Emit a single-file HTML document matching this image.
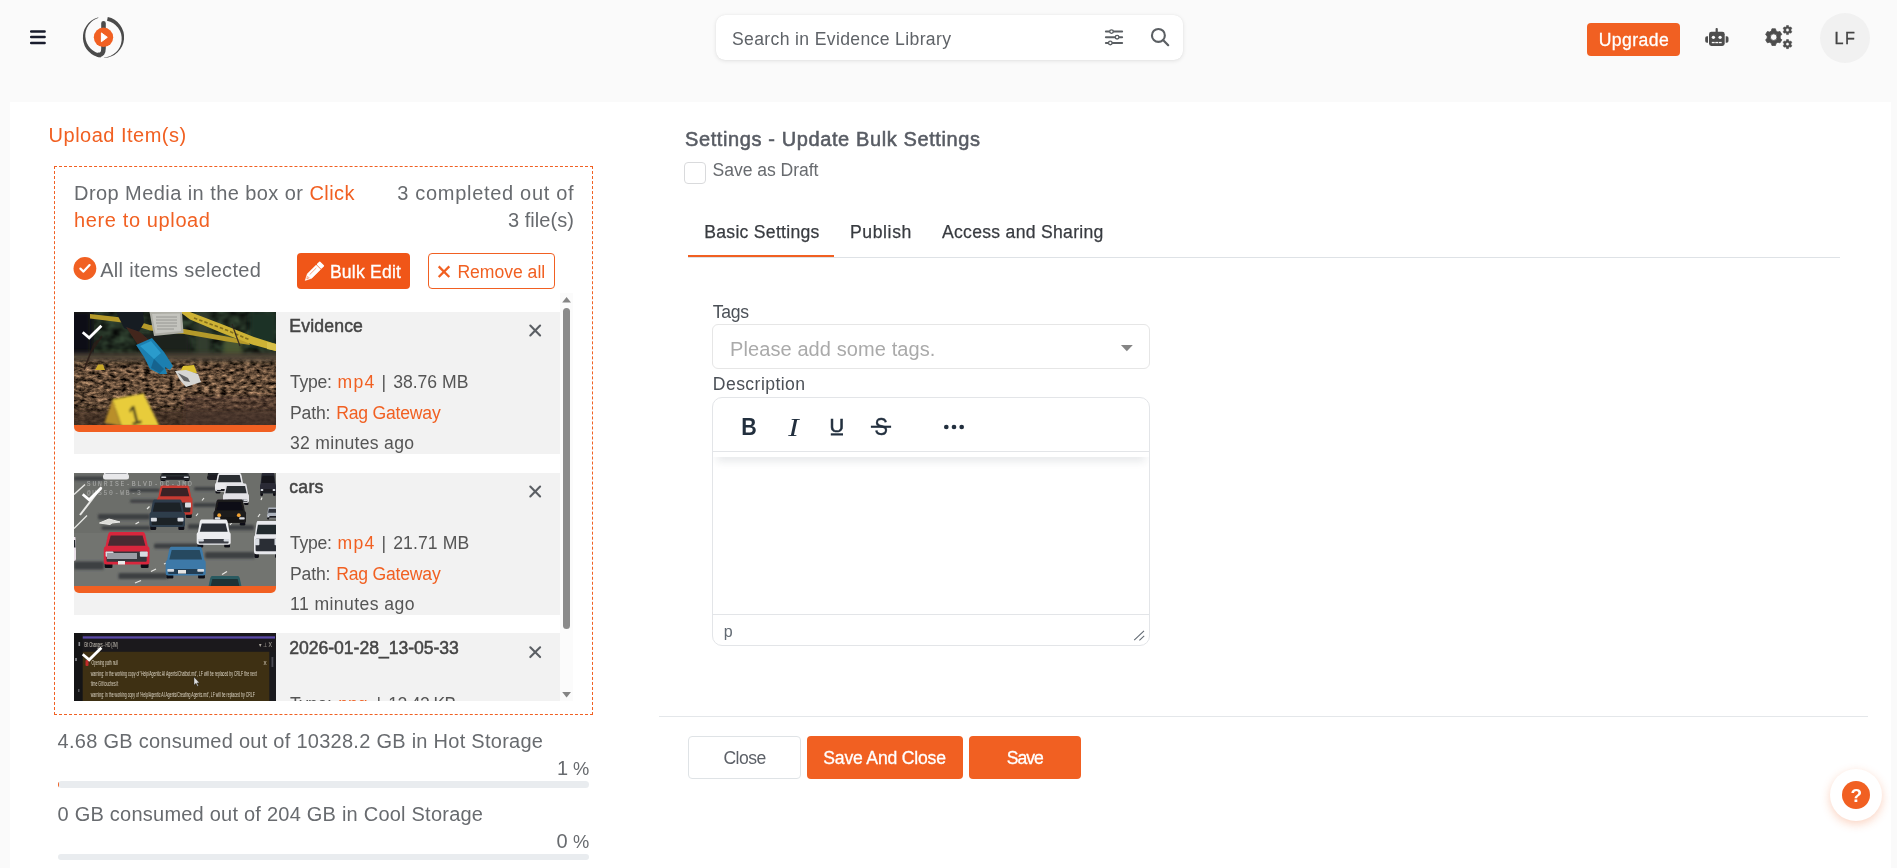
<!DOCTYPE html>
<html lang="en"><head><meta charset="utf-8"><title>Upload Item(s) - Update Bulk Settings</title>
<style>
*{box-sizing:border-box;margin:0;padding:0}
html,body{width:1897px;height:868px;overflow:hidden;background:#fafafa;font-family:"Liberation Sans",sans-serif}
.a{position:absolute}
.t{position:absolute;line-height:1;white-space:nowrap}
.o{background:#f16022}
svg{position:absolute;overflow:visible}
</style></head><body>
<!-- page panel -->
<div class="a" style="left:10px;top:102px;width:1881px;height:766px;background:#fff"></div>

<!-- HEADER -->
<svg style="left:0;top:0" width="60" height="60" viewBox="0 0 60 60"><path d="M31.2 31.5H44.6M31.2 37.1H44.6M31.2 42.95H44.6" stroke="#191c2d" stroke-width="2.5" stroke-linecap="round" fill="none"/></svg>
<svg style="left:0;top:0" width="160" height="80" viewBox="0 0 160 80">
<path d="M97.82 17.40A20.6 20.6 0 0 0 100.63 57.60L101.27 53.92A18.55 18.55 0 0 1 98.74 17.72Z" fill="#4b4b4b"/><path d="M107.78 17.05A20.6 20.6 0 0 1 104.22 57.79L103.80 57.39A18.55 18.55 0 0 0 107.01 20.71Z" fill="#4b4b4b"/>
<path d="M103.5 23.3V48.2C103.5 53 101.8 55 98.6 54.9" fill="none" stroke="#4b4b4b" stroke-width="4.6" stroke-linecap="round"/>
<circle cx="103.5" cy="37.3" r="9.7" fill="#f16022"/>
<path d="M101.4 32.9L107.3 37.3L101.4 41.7Z" fill="#fff" stroke="#fff" stroke-width="1" stroke-linejoin="round"/>
</svg>
<div class="a" style="left:716px;top:15px;width:467px;height:45px;background:#fff;border-radius:9px;box-shadow:0 1px 4px rgba(0,0,0,.10),0 0 1px rgba(0,0,0,.08)"></div>
<svg style="left:0;top:0" width="1897" height="80" viewBox="0 0 1897 80"><path d="M1105.9 31.6H1122.1" stroke="#5b5f63" stroke-width="2" stroke-linecap="round"/><circle cx="1111.5" cy="31.6" r="1.8" fill="#fff" stroke="#5b5f63" stroke-width="1.35"/><path d="M1105.9 37.15H1122.1" stroke="#5b5f63" stroke-width="2" stroke-linecap="round"/><circle cx="1117.1" cy="37.15" r="1.8" fill="#fff" stroke="#5b5f63" stroke-width="1.35"/><path d="M1105.9 42.9H1122.1" stroke="#5b5f63" stroke-width="2" stroke-linecap="round"/><circle cx="1110.3" cy="42.9" r="1.8" fill="#fff" stroke="#5b5f63" stroke-width="1.35"/><circle cx="1158.4" cy="35.4" r="6.45" fill="none" stroke="#5b5f63" stroke-width="2.1"/><path d="M1163.3 40.2L1168.2 45.2" stroke="#5b5f63" stroke-width="2.2" stroke-linecap="round"/><rect x="1709" y="31.8" width="15.7" height="14.2" rx="2.4" fill="#4d4d4d"/><rect x="1715.6" y="28" width="2.2" height="5" rx=".9" fill="#4d4d4d"/><path d="M1708 36.2H1707Q1705.2 36.2 1705.2 38V41Q1705.2 42.8 1707 42.8H1708Z" fill="#4d4d4d"/><path d="M1725.7 36.2H1726.7Q1728.5 36.2 1728.5 38V41Q1728.5 42.8 1726.7 42.8H1725.7Z" fill="#4d4d4d"/><circle cx="1713.4" cy="37.3" r="1.65" fill="#fafafa"/><circle cx="1720.1" cy="37.3" r="1.65" fill="#fafafa"/><rect x="1711.8" y="41.9" width="2.9" height="1.3" fill="#fafafa"/><rect x="1715.3" y="41.9" width="2.9" height="1.3" fill="#fafafa"/><rect x="1718.8" y="41.9" width="2.9" height="1.3" fill="#fafafa"/><path fill-rule="evenodd" fill="#4d4d4d" stroke="#4d4d4d" stroke-width=".8" stroke-linejoin="round" d="M1776.00 43.34L1775.47 45.46L1771.93 45.46L1771.40 43.34L1769.49 42.24L1767.38 42.84L1765.62 39.78L1767.19 38.25L1767.19 36.05L1765.62 34.52L1767.38 31.46L1769.49 32.06L1771.40 30.96L1771.93 28.84L1775.47 28.84L1776.00 30.96L1777.91 32.06L1780.02 31.46L1781.78 34.52L1780.21 36.05L1780.21 38.25L1781.78 39.78L1780.02 42.84L1777.91 42.24ZM1777.00 37.15A3.3 3.3 0 1 0 1770.40 37.15A3.3 3.3 0 1 0 1777.00 37.15Z"/><path fill-rule="evenodd" fill="#4d4d4d" stroke="#4d4d4d" stroke-width=".5" stroke-linejoin="round" d="M1788.72 33.33L1788.47 34.60L1786.53 34.60L1786.28 33.33L1785.27 32.75L1784.04 33.16L1783.08 31.49L1784.05 30.63L1784.05 29.47L1783.08 28.61L1784.04 26.94L1785.27 27.35L1786.28 26.77L1786.53 25.50L1788.47 25.50L1788.72 26.77L1789.73 27.35L1790.96 26.94L1791.92 28.61L1790.95 29.47L1790.95 30.63L1791.92 31.49L1790.96 33.16L1789.73 32.75ZM1789.20 30.05A1.7 1.7 0 1 0 1785.80 30.05A1.7 1.7 0 1 0 1789.20 30.05Z"/><path fill-rule="evenodd" fill="#4d4d4d" stroke="#4d4d4d" stroke-width=".5" stroke-linejoin="round" d="M1788.72 47.38L1788.47 48.65L1786.53 48.65L1786.28 47.38L1785.27 46.80L1784.04 47.21L1783.08 45.54L1784.05 44.68L1784.05 43.52L1783.08 42.66L1784.04 40.99L1785.27 41.40L1786.28 40.82L1786.53 39.55L1788.47 39.55L1788.72 40.82L1789.73 41.40L1790.96 40.99L1791.92 42.66L1790.95 43.52L1790.95 44.68L1791.92 45.54L1790.96 47.21L1789.73 46.80ZM1789.20 44.10A1.7 1.7 0 1 0 1785.80 44.10A1.7 1.7 0 1 0 1789.20 44.10Z"/></svg>
<div class="a o" style="left:1587px;top:23px;width:93px;height:33px;border-radius:4px"></div>
<div class="a" style="left:1820px;top:12.5px;width:50px;height:50px;border-radius:50%;background:#f1f1f1"></div>

<!-- LEFT -->
<div class="a" style="left:54px;top:166px;width:539px;height:549px;border:1px dashed #f16022"></div>
<svg style="left:0;top:0" width="700" height="868" viewBox="0 0 700 868"><circle cx="84.9" cy="268.5" r="11.4" fill="#f16022"/><path d="M80.4 268.6L83.5 271.6L89.6 265.1" fill="none" stroke="#fff" stroke-width="2.2" stroke-linecap="round" stroke-linejoin="round"/></svg>
<div class="a" style="left:297px;top:253px;width:113px;height:36px;border-radius:4px;background:#f05618"></div>
<div class="a" style="left:428px;top:253px;width:127px;height:36px;border-radius:4px;border:1px solid #f16022;background:#fff"></div>
<!-- list -->
<div class="a" style="left:560px;top:293px;width:13px;height:408px;background:#fbfbfb"></div>
<div class="a" style="left:74px;top:296px;width:500px;height:405px;overflow:hidden">
  <div class="a" style="left:0;top:16px;width:486px;height:142px;background:#f2f2f2"></div>
  <div class="a" style="left:0;top:177px;width:486px;height:142px;background:#f2f2f2"></div>
  <div class="a" style="left:0;top:337px;width:486px;height:142px;background:#f2f2f2"></div>
  <div class="a o" style="left:0;top:120px;width:202px;height:16px;border-radius:0 0 5px 5px"></div>
  <div class="a o" style="left:0;top:281px;width:202px;height:16px;border-radius:0 0 5px 5px"></div>
  <svg style="left:0;top:16px;overflow:hidden" width="202" height="113" viewBox="0 0 202 113"><defs><linearGradient id="g1a" x1="0" y1="0" x2="1" y2="0"><stop offset="0" stop-color="#14171a"/><stop offset=".3" stop-color="#1b231f"/><stop offset=".62" stop-color="#26332a"/><stop offset="1" stop-color="#1e2a24"/></linearGradient><linearGradient id="g1c" x1="0" y1="0" x2="0" y2="1"><stop offset="0" stop-color="#6a5a48" stop-opacity=".55"/><stop offset=".2" stop-color="#000" stop-opacity="0"/><stop offset=".62" stop-color="#000" stop-opacity="0"/><stop offset="1" stop-color="#20130c" stop-opacity=".5"/></linearGradient><filter id="bl1"><feGaussianBlur stdDeviation="2.2"/></filter><filter id="bl2"><feGaussianBlur stdDeviation="0.55"/></filter><filter id="bl3"><feGaussianBlur stdDeviation="1"/></filter><filter id="leaf" x="0" y="0" width="1" height="1" color-interpolation-filters="sRGB"><feTurbulence type="fractalNoise" baseFrequency="0.17 0.3" numOctaves="3" seed="11"/><feColorMatrix type="matrix" values="1.15 0 0 0 -0.195  0.92 0 0 0 -0.17  0.72 0 0 0 -0.145  0 0 0 0 1"/></filter><filter id="fol" x="0" y="0" width="1" height="1" color-interpolation-filters="sRGB"><feTurbulence type="fractalNoise" baseFrequency="0.09 0.12" numOctaves="2" seed="3"/><feColorMatrix type="matrix" values="0.3 0 0 0 -0.03  0.42 0 0 0 -0.045  0.3 0 0 0 -0.03  0 0 0 0 .9"/></filter></defs><rect width="202" height="113" fill="url(#g1a)"/><rect x="20" width="182" height="52" filter="url(#fol)"/><g filter="url(#bl1)"><rect x="150" y="22" width="18" height="30" fill="#4a5630"/><rect x="122" y="0" width="14" height="46" fill="#303c2e"/><rect x="176" y="0" width="26" height="34" fill="#1f3228"/><rect x="-4" y="0" width="20" height="52" fill="#0e1012"/><rect x="66" y="22" width="50" height="24" fill="#1c241e"/></g><rect y="44" width="202" height="69" filter="url(#leaf)"/><rect y="44" width="202" height="69" fill="url(#g1c)"/><g filter="url(#bl1)"><rect x="-5" y="41" width="212" height="7" fill="#4c4334"/><rect x="-5" y="98" width="212" height="20" fill="#46342a" opacity=".6"/><rect x="110" y="84" width="100" height="34" fill="#4a382c" opacity=".45"/></g><path d="M10 58L20 32L24 28M17 40L28 24" stroke="#2a1c16" stroke-width="1.6" fill="none" opacity=".8"/><g filter="url(#bl2)"><path d="M16 2L52 6L76 13L110 17L150 24L174 29L176 33L150 29L110 22L76 18.5L52 11L16 6.5Z" fill="#b59a2a"/><path d="M106 0L116 0L150 13L180 25L202 32L202 39L178 32.5L148 21L116 7.5Z" fill="#cdb234"/><path d="M120 6L150 17L176 28" stroke="#6b5a18" stroke-width="1.6" stroke-dasharray="3.5 2" fill="none" opacity=".75"/><path d="M193 30L202 32L202 39L193 37Z" fill="#d8c048"/></g><path d="M158 12L163 26L166 34" stroke="#2b2220" stroke-width="1.3" fill="none" opacity=".85"/><g filter="url(#bl2)"><path d="M75.5 0L108 0L109.5 21L80 24Z" fill="#aeaea6"/><path d="M78 2L106 1.5L107 19L81.5 21.5Z" fill="#c4c4be"/><path d="M82 5H103M82 8H103M82 11H103M83 14H103M83 17H100" stroke="#8e8e88" stroke-width=".8"/></g><g filter="url(#bl2)"><path d="M42 0L69 0L70 11L64 21L50 16Z" fill="#171a24"/><path d="M52 15L66 20L77 30L66 36Z" fill="#43281e"/><path d="M62 33L78 26L90 40L99 54L96 58L91 55L93 62L86 62L76 57L70 45Z" fill="#1a7fb0"/><path d="M66 34L77 29L87 41L80 47Z" fill="#2a9bcc"/><path d="M80 47L90 57L86 61L77 56Z" fill="#13638e"/></g><g filter="url(#bl2)"><path d="M21 58L24 52.5L29 52.5L31 58Z" fill="#c9a92a"/><path d="M106 60L109 54L120 53L123 61Z" fill="#dcc030"/><path d="M101 59L112 58L124 62L127 70L118 73L112 75L106 68Z" fill="#d6d6d3"/><path d="M104 61L114 66L116 70L110 69Z" fill="#626262"/></g><g filter="url(#bl3)"><path d="M38.5 87.5L30.5 111L47 114Z" fill="#b98f2a"/><path d="M38.5 87.3L69.5 81.5L85.5 114L47.5 114Z" fill="#e8cc3a"/><text x="55" y="112" font-family="Liberation Sans, sans-serif" font-weight="700" font-size="27" fill="#3a3420" transform="rotate(-14 62 102)" opacity=".85" textLength="11" lengthAdjust="spacingAndGlyphs">1</text></g><path d="M9.799999999999999 21.2L15.2 25.799999999999997L26.4 14.799999999999999" fill="none" stroke="#fff" stroke-width="2.8" stroke-linecap="square" stroke-linejoin="miter"/></svg><svg style="left:0;top:177px;overflow:hidden" width="202" height="113" viewBox="0 0 202 113"><defs><filter id="b2"><feGaussianBlur stdDeviation="0.45"/></filter><filter id="b3" x="-10%" y="-50%" width="120%" height="200%"><feGaussianBlur stdDeviation="1"/></filter></defs><rect width="202" height="113" fill="#6c6e6a"/><rect y="60" width="202" height="53" fill="#727470"/><g filter="url(#b2)"><rect x="0" y="3.5" width="30" height="4" rx="1.5" fill="#3d3f43" filter="url(#b3)"/><rect x="55" y="15.5" width="31" height="3.6" rx="1.5" fill="#3d3f43" filter="url(#b3)"/><rect x="56" y="26.5" width="28" height="3.2" rx="1.5" fill="#3d3f43" filter="url(#b3)"/><rect x="119" y="30" width="24" height="4" rx="1.5" fill="#3d3f43" filter="url(#b3)"/><rect x="24" y="41" width="52" height="5.5" rx="1.5" fill="#3d3f43" filter="url(#b3)"/><rect x="27.6" y="53" width="49" height="4" rx="1.5" fill="#3d3f43" filter="url(#b3)"/><rect x="80" y="70.5" width="44" height="5" rx="1.5" fill="#3d3f43" filter="url(#b3)"/><rect x="131" y="79" width="50" height="6.5" rx="1.5" fill="#3d3f43" filter="url(#b3)"/><rect x="0" y="88.5" width="30" height="8" rx="1.5" fill="#3d3f43" filter="url(#b3)"/><rect x="44.5" y="100" width="49" height="6" rx="1.5" fill="#3d3f43" filter="url(#b3)"/><rect x="120" y="14" width="22" height="3.5" rx="1.5" fill="#3d3f43" filter="url(#b3)"/><rect x="114" y="51" width="28" height="5" rx="1.5" fill="#3d3f43" filter="url(#b3)"/><rect x="150" y="52" width="30" height="5" rx="1.5" fill="#3d3f43" filter="url(#b3)"/><g stroke="#e9e9e6" fill="none"><path d="M0 21.5L11 11.5" stroke-width="1.4"/><path d="M6 42L27.5 14" stroke-width="2"/><path d="M0 55.5L13 42.5" stroke-width="1.2"/><path d="M25.5 50L35 46L46 49L38 50L36 51.5Z" stroke-width="1" fill="#dcdcd8"/><path d="M73 36L75.5 33.5" stroke-width="1.2"/><path d="M61.5 51L65 49" stroke-width="1.2"/><path d="M77 98.5L82 96" stroke-width="1.2"/><path d="M61 110L67 107.5" stroke-width="1.2"/><path d="M148 101.5L153 98.5" stroke-width="1.2"/><path d="M122 43L124 40.5" stroke-width="1.2"/><path d="M128 27.5L130 25" stroke-width="1.2"/><path d="M184 44L186 41" stroke-width="1.2"/><path d="M187 27L188 24.5" stroke-width="1.2"/><path d="M156 52L158 49.5" stroke-width="1.2"/><path d="M90 91L95 89" stroke-width="1.2"/></g><path d="M32.6 -4.0H51.4Q52.4 -4.0 52.9 -2.4L54.2 1.2H29.8L31.1 -2.4Q31.6 -4.0 32.6 -4.0Z" fill="#e8e8ea"/><path d="M32.9 -2.7H51.1L52.7 0.6H31.3Z" fill="#23262c"/><rect x="29.0" y="0.7" width="26.0" height="5.8" rx="2.5" fill="#e8e8ea"/><rect x="86.6" y="5.1" width="5.1" height="2.9" rx="1.2" fill="#111114"/><rect x="110.3" y="5.1" width="5.1" height="2.9" rx="1.2" fill="#111114"/><path d="M90.2 -3.0H111.8Q113.0 -3.0 113.6 -1.4L115.1 2.5H86.9L88.4 -1.4Q89.0 -3.0 90.2 -3.0Z" fill="#2c2e32"/><path d="M90.5 -1.7H111.5L113.3 1.8H88.7Z" fill="#1a1c20"/><rect x="86.0" y="2.0" width="30.0" height="5.0" rx="2.5" fill="#2c2e32"/><rect x="87.8" y="3.6" width="26.4" height="2.6" rx="1" fill="#1c1c20"/><rect x="87.2" y="3.6" width="5.1" height="1.4" rx=".8" fill="#d8dce2"/><rect x="109.7" y="3.6" width="5.1" height="1.4" rx=".8" fill="#d8dce2"/><path d="M135.2 -2.0H146.8Q147.4 -2.0 147.7 -0.7L148.5 2.5H133.5L134.3 -0.7Q134.6 -2.0 135.2 -2.0Z" fill="#1e1e22"/><path d="M135.4 -0.9H146.6L147.6 2.0H134.4Z" fill="#23262c"/><rect x="133.0" y="2.0" width="16.0" height="5.0" rx="2.5" fill="#1e1e22"/><rect x="141.6" y="15.2" width="4.9" height="5.3" rx="1.2" fill="#111114"/><rect x="164.5" y="15.2" width="4.9" height="5.3" rx="1.2" fill="#111114"/><path d="M145.1 0.0H165.9Q167.1 0.0 167.7 3.2L169.1 10.7H141.9L143.3 3.2Q143.9 0.0 145.1 0.0Z" fill="#e9e9ec"/><path d="M145.3 2.1H165.7L167.4 9.4H143.6Z" fill="#2a2d33"/><rect x="141.0" y="9.6" width="29.0" height="8.9" rx="2.5" fill="#e9e9ec"/><rect x="142.7" y="16.0" width="25.5" height="2.0" rx="1" fill="#1c1c20"/><rect x="142.2" y="16.0" width="4.9" height="1.0" rx=".8" fill="#d8dce2"/><rect x="163.9" y="16.0" width="4.9" height="1.0" rx=".8" fill="#d8dce2"/><rect x="186.3" y="17.0" width="2.7" height="6.0" rx="1.2" fill="#111114"/><rect x="199.0" y="17.0" width="2.7" height="6.0" rx="1.2" fill="#111114"/><path d="M188.2 0.0H199.8Q200.4 0.0 200.7 3.4L201.5 11.5H186.5L187.3 3.4Q187.6 0.0 188.2 0.0Z" fill="#2a2c36"/><path d="M188.4 2.8H199.6L200.6 10.1H187.4Z" fill="#15161a"/><rect x="186.0" y="10.3" width="16.0" height="10.3" rx="2.5" fill="#2a2c36"/><rect x="187.0" y="16.1" width="14.1" height="3.7" rx="1" fill="#1c1c20"/><rect x="186.6" y="16.1" width="2.7" height="1.9" rx=".8" fill="#d8dce2"/><rect x="198.6" y="16.1" width="2.7" height="1.9" rx=".8" fill="#d8dce2"/><rect x="83.7" y="36.5" width="6.0" height="8.5" rx="1.2" fill="#111114"/><rect x="111.8" y="36.5" width="6.0" height="8.5" rx="1.2" fill="#111114"/><path d="M88.0 12.5H113.5Q115.0 12.5 115.7 16.3L117.4 25.2H84.1L85.8 16.3Q86.5 12.5 88.0 12.5Z" fill="#c83a30"/><path d="M88.3 15.1H113.2L115.3 23.2H86.2Z" fill="#3a2226"/><rect x="83.0" y="23.9" width="35.5" height="17.8" rx="2.5" fill="#c83a30"/><rect x="85.1" y="29.4" width="31.2" height="9.9" rx="1" fill="#26262a"/><rect x="84.4" y="29.4" width="6.0" height="5.2" rx=".8" fill="#d8dce2"/><rect x="111.0" y="29.4" width="6.0" height="5.2" rx=".8" fill="#d8dce2"/><rect x="149.5" y="26.4" width="4.4" height="5.6" rx="1.2" fill="#111114"/><rect x="170.1" y="26.4" width="4.4" height="5.6" rx="1.2" fill="#111114"/><path d="M152.6 10.5H171.4Q172.4 10.5 172.9 13.9L174.2 21.7H149.8L151.1 13.9Q151.6 10.5 152.6 10.5Z" fill="#e2e2e6"/><path d="M152.9 13.1H171.1L172.7 20.4H151.3Z" fill="#2a2d33"/><rect x="149.0" y="20.6" width="26.0" height="9.3" rx="2.5" fill="#e2e2e6"/><rect x="150.6" y="26.6" width="22.9" height="2.6" rx="1" fill="#55585e"/><rect x="150.0" y="26.6" width="4.4" height="1.4" rx=".8" fill="#d8dce2"/><rect x="169.5" y="26.6" width="4.4" height="1.4" rx=".8" fill="#d8dce2"/><rect x="76.2" y="49.1" width="6.0" height="7.9" rx="1.2" fill="#111114"/><rect x="104.3" y="49.1" width="6.0" height="7.9" rx="1.2" fill="#111114"/><path d="M80.5 26.5H106.0Q107.5 26.5 108.2 30.7L109.9 40.5H76.6L78.3 30.7Q79.0 26.5 80.5 26.5Z" fill="#2f3c4c"/><path d="M80.8 29.6H105.7L107.8 38.7H78.7Z" fill="#1c2028"/><rect x="75.5" y="39.1" width="35.5" height="14.8" rx="2.5" fill="#2f3c4c"/><rect x="77.6" y="44.8" width="31.2" height="7.3" rx="1" fill="#1e2228"/><rect x="76.9" y="44.8" width="6.0" height="3.8" rx=".8" fill="#d8dce2"/><rect x="103.5" y="44.8" width="6.0" height="3.8" rx=".8" fill="#d8dce2"/><rect x="140.2" y="45.7" width="5.5" height="6.8" rx="1.2" fill="#111114"/><rect x="165.8" y="45.7" width="5.5" height="6.8" rx="1.2" fill="#111114"/><path d="M144.1 26.5H167.4Q168.8 26.5 169.4 30.2L171.0 39.0H140.5L142.1 30.2Q142.8 26.5 144.1 26.5Z" fill="#1e1b1f"/><path d="M144.4 29.1H167.1L169.1 37.4H142.4Z" fill="#0f0f12"/><rect x="139.5" y="37.7" width="32.5" height="12.2" rx="2.5" fill="#1e1b1f"/><rect x="141.4" y="44.2" width="28.6" height="4.6" rx="1" fill="#141416"/><rect x="140.8" y="44.2" width="5.5" height="2.4" rx=".8" fill="#d8dce2"/><rect x="165.2" y="44.2" width="5.5" height="2.4" rx=".8" fill="#d8dce2"/><circle cx="145.2" cy="42.2" r="1.9" fill="#f2a432"/><circle cx="164.8" cy="42.2" r="1.9" fill="#f2a432"/><rect x="193.2" y="43.4" width="2.0" height="3.1" rx="1.2" fill="#111114"/><rect x="202.7" y="43.4" width="2.0" height="3.1" rx="1.2" fill="#111114"/><path d="M194.7 34.5H203.3Q203.8 34.5 204.0 36.3L204.6 40.5H193.4L194.0 36.3Q194.2 34.5 194.7 34.5Z" fill="#aeb4be"/><path d="M194.8 35.9H203.2L203.9 39.8H194.1Z" fill="#30343c"/><rect x="193.0" y="39.9" width="12.0" height="5.4" rx="2.5" fill="#aeb4be"/><rect x="193.7" y="42.9" width="10.6" height="1.9" rx="1" fill="#1c1c20"/><rect x="193.5" y="42.9" width="2.0" height="1.0" rx=".8" fill="#d8dce2"/><rect x="202.5" y="42.9" width="2.0" height="1.0" rx=".8" fill="#d8dce2"/><rect x="123.4" y="67.2" width="5.8" height="7.3" rx="1.2" fill="#111114"/><rect x="150.2" y="67.2" width="5.8" height="7.3" rx="1.2" fill="#111114"/><path d="M127.5 46.5H151.9Q153.3 46.5 154.0 50.7L155.7 60.5H123.7L125.4 50.7Q126.1 46.5 127.5 46.5Z" fill="#ecedf0"/><path d="M127.8 50.4H151.6L153.6 58.8H125.8Z" fill="#2a2e36"/><rect x="122.7" y="59.1" width="34.0" height="12.6" rx="2.5" fill="#ecedf0"/><rect x="124.7" y="66.1" width="29.9" height="4.5" rx="1" fill="#3c3f46"/><rect x="124.1" y="66.1" width="5.8" height="2.4" rx=".8" fill="#d8dce2"/><rect x="149.6" y="66.1" width="5.8" height="2.4" rx=".8" fill="#d8dce2"/><rect x="180.5" y="75.4" width="4.4" height="9.6" rx="1.2" fill="#111114"/><rect x="201.1" y="75.4" width="4.4" height="9.6" rx="1.2" fill="#111114"/><path d="M183.6 48.0H202.4Q203.4 48.0 203.9 52.7L205.2 63.5H180.8L182.1 52.7Q182.6 48.0 183.6 48.0Z" fill="#e8e9ed"/><path d="M183.9 51.7H202.1L203.7 61.3H182.3Z" fill="#23292e"/><rect x="180.0" y="62.0" width="26.0" height="19.3" rx="2.5" fill="#e8e9ed"/><rect x="181.6" y="65.8" width="22.9" height="12.4" rx="1" fill="#2b2e34"/><rect x="181.0" y="65.8" width="4.4" height="6.5" rx=".8" fill="#d8dce2"/><rect x="200.5" y="65.8" width="4.4" height="6.5" rx=".8" fill="#d8dce2"/><rect x="30.7" y="85.6" width="7.8" height="9.4" rx="1.2" fill="#111114"/><rect x="66.8" y="85.6" width="7.8" height="9.4" rx="1.2" fill="#111114"/><path d="M36.2 59.0H69.1Q70.9 59.0 71.8 63.8L74.1 74.8H31.2L33.5 63.8Q34.4 59.0 36.2 59.0Z" fill="#d8283e"/><path d="M36.7 62.6H68.6L71.4 72.7H33.9Z" fill="#4a2a32"/><rect x="29.8" y="73.3" width="45.7" height="18.1" rx="2.5" fill="#d8283e"/><rect x="32.5" y="78.4" width="40.2" height="10.4" rx="1" fill="#35353a"/><rect x="31.6" y="78.4" width="7.8" height="5.4" rx=".8" fill="#d8dce2"/><rect x="65.9" y="78.4" width="7.8" height="5.4" rx=".8" fill="#d8dce2"/><rect x="33" y="80" width="30" height="6" fill="#9a9ca4"/><rect x="44" y="88" width="7" height="3.5" fill="#e8e8e8"/><rect x="92.5" y="97.2" width="6.8" height="8.3" rx="1.2" fill="#111114"/><rect x="124.1" y="97.2" width="6.8" height="8.3" rx="1.2" fill="#111114"/><path d="M97.3 73.7H126.1Q127.7 73.7 128.5 78.1L130.5 88.3H92.9L94.9 78.1Q95.7 73.7 97.3 73.7Z" fill="#3c79a8"/><path d="M97.7 76.9H125.7L128.1 86.4H95.3Z" fill="#274a60"/><rect x="91.7" y="86.9" width="40.0" height="15.5" rx="2.5" fill="#3c79a8"/><rect x="94.1" y="96.0" width="35.2" height="5.1" rx="1" fill="#243d52"/><rect x="93.3" y="96.0" width="6.8" height="2.7" rx=".8" fill="#d8dce2"/><rect x="123.3" y="96.0" width="6.8" height="2.7" rx=".8" fill="#d8dce2"/><rect x="104" y="97" width="8" height="3.6" fill="#e4e4e4"/><path d="M138.0 103.0H164.0Q165.4 103.0 166.1 106.7L167.9 115.3H134.1L135.9 106.7Q136.6 103.0 138.0 103.0Z" fill="#2c5a60"/><path d="M138.4 106.1H163.6L165.8 114.5H136.2Z" fill="#1a3036"/><rect x="133.0" y="114.1" width="36.0" height="2.9" rx="2.5" fill="#2c5a60"/><path d="M-2.3 64.0H1.3Q1.5 64.0 1.6 67.6L1.8 76.0H-2.9L-2.6 67.6Q-2.5 64.0 -2.3 64.0Z" fill="#e9dfe8"/><path d="M-2.2 66.9H1.2L1.5 74.6H-2.5Z" fill="#23262c"/><rect x="-3.0" y="74.8" width="5.0" height="13.2" rx="2.5" fill="#e9dfe8"/></g><text x="12.8" y="13.2" font-family="Liberation Mono, monospace" font-size="6.4" fill="#e8e8e8" opacity=".5" textLength="105" lengthAdjust="spacing">SUNRISE-BLVD-OC-JMD</text><text x="12.8" y="21.6" font-family="Liberation Mono, monospace" font-size="6.4" fill="#e8e8e8" opacity=".45" textLength="54" lengthAdjust="spacing">@US50-WB-3</text><path d="M9.799999999999999 22.2L15.2 26.799999999999997L26.4 15.799999999999999" fill="none" stroke="#fff" stroke-width="2.8" stroke-linecap="square" stroke-linejoin="miter"/></svg><svg style="left:0;top:337px;overflow:hidden" width="202" height="113" viewBox="0 0 202 113"><rect width="202" height="113" fill="#1b191c"/><rect x="8.5" y="3.3" width="192.5" height="2.3" fill="#5a49a6"/><rect x="8.5" y="18.8" width="187" height="95" fill="#3e3013"/><rect x="0" y="0" width="8.5" height="113" fill="#141416"/><rect x="195.5" y="18.8" width="6.5" height="95" fill="#1a1a1e"/><rect x="4.5" y="9" width="1.6" height="4" fill="#8a8a90"/><rect x="1" y="25" width="2" height="3" fill="#77777c"/><rect x="4" y="56" width="1.5" height="3" fill="#55555a"/><rect x="197.5" y="24" width="1.8" height="10" fill="#4a4a52"/><rect x="11.5" y="27" width="3" height="6" rx="1" fill="#c02a2a"/><text x="10" y="14" font-family="Liberation Sans, sans-serif" font-size="6.3" fill="#f0eadc" opacity=".8" textLength="34" lengthAdjust="spacingAndGlyphs">Git Changes - HD (JM)</text><text x="185" y="14" font-family="Liberation Sans, sans-serif" font-size="6.3" fill="#f0eadc" opacity=".7" textLength="13" lengthAdjust="spacingAndGlyphs">▾ ⊥ X</text><text x="17.4" y="31.5" font-family="Liberation Sans, sans-serif" font-size="6.3" fill="#f0eadc" opacity=".86" textLength="26.5" lengthAdjust="spacingAndGlyphs">Opening path null</text><text x="189.5" y="31.5" font-family="Liberation Sans, sans-serif" font-size="6.3" fill="#f0eadc" opacity=".75">x</text><text x="16.8" y="42.5" font-family="Liberation Sans, sans-serif" font-size="6.3" fill="#f0eadc" opacity=".86" textLength="166" lengthAdjust="spacingAndGlyphs">warning: in the working copy of 'Help/Agentic AI Agents/Chatbot.md', LF will be replaced by CRLF the next</text><text x="16.8" y="53" font-family="Liberation Sans, sans-serif" font-size="6.3" fill="#f0eadc" opacity=".86" textLength="27.5" lengthAdjust="spacingAndGlyphs">time Git touches it</text><text x="16.8" y="63.5" font-family="Liberation Sans, sans-serif" font-size="6.3" fill="#f0eadc" opacity=".86" textLength="164" lengthAdjust="spacingAndGlyphs">warning: in the working copy of 'Help/Agentic AI Agents/Creating Agents.md', LF will be replaced by CRLF</text><path d="M120 44L120 52L122 50.3L123.4 53.2L124.4 52.7L123 49.9L125.3 49.7Z" fill="#ddd" stroke="#222" stroke-width=".4"/><path d="M9.799999999999999 22.2L15.2 26.799999999999997L26.4 15.799999999999999" fill="none" stroke="#fff" stroke-width="2.8" stroke-linecap="square" stroke-linejoin="miter"/></svg>
  <div class="a" style="left:489px;top:11.8px;width:7px;height:320.8px;border-radius:3.5px;background:#8b8b8b"></div>
</div>
<div class="a" style="left:0;top:296px;width:700px;height:405px;overflow:hidden"><div class="a" style="left:0;top:-296px;width:700px;height:868px">
<div id="it1t" class="t" style="left:289.3px;top:318.01px;font-size:17.6px;color:#444;font-weight:400;letter-spacing:0.173px;-webkit-text-stroke:.5px #444;">Evidence</div>
<div id="it1y" class="t" style="left:290px;top:374.01px;font-size:17.6px;color:#555;font-weight:400;letter-spacing:-0.308px;">Type:</div>
<div id="it1e" class="t" style="left:337.6px;top:374.01px;font-size:17.6px;color:#f16022;font-weight:400;letter-spacing:1.183px;">mp4</div>
<div id="it1b" class="t" style="left:381.4px;top:374.01px;font-size:17.6px;color:#555;font-weight:400;letter-spacing:0.000px;">|</div>
<div id="it1s" class="t" style="left:393.2px;top:374.01px;font-size:17.6px;color:#555;font-weight:400;letter-spacing:-0.016px;">38.76 MB</div>
<div id="it1p" class="t" style="left:290px;top:405.01px;font-size:17.6px;color:#555;font-weight:400;letter-spacing:-0.173px;">Path:</div>
<div id="it1g" class="t" style="left:336.2px;top:405.01px;font-size:17.6px;color:#f16022;font-weight:400;letter-spacing:-0.209px;">Rag Gateway</div>
<div id="it1a" class="t" style="left:290px;top:435.00px;font-size:17.6px;color:#555;font-weight:400;letter-spacing:0.284px;">32 minutes ago</div>
<div id="it2t" class="t" style="left:289.3px;top:479.01px;font-size:17.6px;color:#444;font-weight:400;letter-spacing:0.250px;-webkit-text-stroke:.5px #444;">cars</div>
<div id="it2y" class="t" style="left:290px;top:535.01px;font-size:17.6px;color:#555;font-weight:400;letter-spacing:-0.308px;">Type:</div>
<div id="it2e" class="t" style="left:337.6px;top:535.01px;font-size:17.6px;color:#f16022;font-weight:400;letter-spacing:1.183px;">mp4</div>
<div id="it2b" class="t" style="left:381.4px;top:535.01px;font-size:17.6px;color:#555;font-weight:400;letter-spacing:0.000px;">|</div>
<div id="it2s" class="t" style="left:393.2px;top:535.01px;font-size:17.6px;color:#555;font-weight:400;letter-spacing:0.098px;">21.71 MB</div>
<div id="it2p" class="t" style="left:290px;top:566.01px;font-size:17.6px;color:#555;font-weight:400;letter-spacing:-0.173px;">Path:</div>
<div id="it2g" class="t" style="left:336.2px;top:566.01px;font-size:17.6px;color:#f16022;font-weight:400;letter-spacing:-0.209px;">Rag Gateway</div>
<div id="it2a" class="t" style="left:290px;top:596.00px;font-size:17.6px;color:#555;font-weight:400;letter-spacing:0.423px;">11 minutes ago</div>
<div id="it3t" class="t" style="left:289.3px;top:640.01px;font-size:17.6px;color:#444;font-weight:400;letter-spacing:-0.040px;-webkit-text-stroke:.5px #444;">2026-01-28_13-05-33</div>
<div id="it3y" class="t" style="left:290px;top:696.01px;font-size:17.6px;color:#555;font-weight:400;letter-spacing:-0.308px;">Type:</div>
<div id="it3e" class="t" style="left:338.2px;top:696.01px;font-size:17.6px;color:#f16022;font-weight:400;letter-spacing:-0.030px;">png</div>
<div id="it3b" class="t" style="left:376.5px;top:696.01px;font-size:17.6px;color:#555;font-weight:400;letter-spacing:0.000px;">|</div>
<div id="it3s" class="t" style="left:388.3px;top:696.01px;font-size:17.6px;color:#555;font-weight:400;letter-spacing:-0.627px;">12.42 KB</div>
<div id="it3p" class="t" style="left:290px;top:726.00px;font-size:17.6px;color:#555;font-weight:400;letter-spacing:-0.173px;">Path:</div>
<div id="it3g" class="t" style="left:336.2px;top:726.00px;font-size:17.6px;color:#f16022;font-weight:400;letter-spacing:-0.209px;">Rag Gateway</div>
<div id="it3a" class="t" style="left:290px;top:756.01px;font-size:17.6px;color:#555;font-weight:400;letter-spacing:0.297px;">1 minute ago</div>
</div></div>
<svg style="left:0;top:0" width="700" height="868" viewBox="0 0 700 868"><path d="M305.20 280.40L311.81 278.24L320.65 269.40L316.20 264.95L307.36 273.79Z" fill="#fff" stroke="#fff" stroke-width=".5" stroke-linejoin="round"/><path d="M321.22 267.99L323.34 265.87L319.73 262.26L317.61 264.38Z" fill="#fff" stroke="#fff" stroke-width="1.5" stroke-linejoin="round"/><path d="M309.65 274.67L316.30 268.03" stroke="#f05618" stroke-width=".55"/><path d="M306.76 278.84L309.23 277.93L307.67 276.37Z" fill="none" stroke="#f05618" stroke-width=".45"/><path d="M438.7 266.4L449.3 277.0M449.3 266.4L438.7 277.0" stroke="#f16022" stroke-width="2.3" stroke-linecap="butt" fill="none"/><path d="M530.3000000000001 325.6L540.1 335.4M540.1 325.6L530.3000000000001 335.4" stroke="#5b5f64" stroke-width="2.1" stroke-linecap="round" fill="none"/><path d="M530.3000000000001 486.6L540.1 496.4M540.1 486.6L530.3000000000001 496.4" stroke="#5b5f64" stroke-width="2.1" stroke-linecap="round" fill="none"/><path d="M530.3000000000001 647.3000000000001L540.1 657.1M540.1 647.3000000000001L530.3000000000001 657.1" stroke="#5b5f64" stroke-width="2.1" stroke-linecap="round" fill="none"/><path d="M562.2 302.4L566.6 296.9L571 302.4Z" fill="#858585"/><path d="M562.2 692L571 692L566.6 697.6Z" fill="#858585"/></svg>
<!-- storage bars -->
<div class="a" style="left:58px;top:781px;width:531px;height:6.8px;border-radius:3.5px;background:#e9ecef;overflow:hidden"><div class="a o" style="left:0;top:0;width:1.2px;height:7px"></div></div>
<div class="a" style="left:58px;top:854.2px;width:531px;height:6px;border-radius:3px;background:#e9ecef"></div>

<!-- RIGHT -->
<div class="a" style="left:684px;top:162px;width:22px;height:22px;border:1px solid #d9dadc;border-radius:4px;background:#fff"></div>
<div class="a" style="left:688px;top:257px;width:1152px;height:1px;background:#dee2e6"></div>
<div class="a o" style="left:688px;top:255px;width:146px;height:2.4px"></div>
<div class="a" style="left:712px;top:324px;width:438px;height:44.5px;border:1px solid #e6e6e6;border-radius:6px;background:#fff"></div>
<!-- editor -->
<div class="a" style="left:712px;top:397px;width:438px;height:248.5px;border:1px solid #e3e5e8;border-radius:10px;background:#fff;overflow:hidden">
  <div class="a" style="left:0;top:53px;width:438px;height:1px;background:#e3e5e8"></div>
  <div class="a" style="left:4px;top:50px;width:428px;height:9px;box-shadow:0 4px 8px rgba(34,47,62,.12);clip-path:inset(9px -10px -20px -10px)"></div>
  <div class="a" style="left:0;top:216px;width:438px;height:1px;background:#e3e5e8"></div>
</div>
<svg style="left:0;top:0" width="1897" height="868" viewBox="0 0 1897 868"><path d="M1120.9 345L1132.8 345L1126.85 351.2Z" fill="#858585"/><text x="741.3" y="435.3" font-family="Liberation Sans, sans-serif" font-weight="700" font-size="23.8" fill="#222f3e" textLength="15.5" lengthAdjust="spacingAndGlyphs">B</text><text x="788.3" y="435.5" font-family="Liberation Serif, serif" font-style="italic" font-size="25.5" fill="#222f3e" textLength="10.5" lengthAdjust="spacingAndGlyphs">I</text><text x="829.6" y="431.6" font-family="Liberation Sans, sans-serif" font-size="18.4" fill="#222f3e" stroke="#222f3e" stroke-width=".5" textLength="14.6" lengthAdjust="spacingAndGlyphs">U</text><rect x="830.8" y="433.3" width="12.2" height="2.2" fill="#222f3e"/><text x="874.4" y="435.2" font-family="Liberation Sans, sans-serif" font-size="23.6" fill="#222f3e" stroke="#222f3e" stroke-width=".4" textLength="13.4" lengthAdjust="spacingAndGlyphs">S</text><rect x="870.9" y="425.7" width="20.2" height="2.1" fill="#222f3e" stroke="#fff" stroke-width="0"/><circle cx="946.3" cy="427" r="2.35" fill="#222f3e"/><circle cx="954" cy="427" r="2.35" fill="#222f3e"/><circle cx="961.7" cy="427" r="2.35" fill="#222f3e"/><path d="M1134.2 640.2L1144 630.8M1139.4 640.4L1144.2 635.8" stroke="#626a73" stroke-width="1.1" fill="none"/></svg>
<div class="a" style="left:659px;top:716px;width:1209px;height:1px;background:#e4e7ea"></div>
<div class="a" style="left:688px;top:736px;width:113px;height:43px;border:1px solid #dfe3e6;border-radius:4px;background:#fff"></div>
<div class="a o" style="left:807px;top:736px;width:156px;height:43px;border-radius:4px"></div>
<div class="a o" style="left:969px;top:736px;width:112px;height:43px;border-radius:4px"></div>
<!-- help fab -->
<div class="a" style="left:1830px;top:769px;width:52px;height:52px;border-radius:50%;background:#fff;box-shadow:0 3px 10px rgba(241,96,34,.28)"></div>
<div class="a o" style="left:1842px;top:781px;width:28px;height:28px;border-radius:50%"></div>
<div class="t" style="left:1850.5px;top:785.5px;font-size:19px;font-weight:700;color:#fff">?</div>
<div id="search" class="t" style="left:732px;top:31.00px;font-size:17.6px;color:#5f6368;font-weight:400;letter-spacing:0.349px;">Search in Evidence Library</div>
<div id="upgrade" class="t" style="left:1598.7px;top:32.01px;font-size:17.6px;color:#fff;font-weight:400;letter-spacing:0.417px;-webkit-text-stroke:.3px #fff;">Upgrade</div>
<div id="lf" class="t" style="left:1834.5px;top:30.01px;font-size:16.2px;color:#444;font-weight:400;letter-spacing:1.394px;-webkit-text-stroke:.3px #444;">LF</div>
<div id="uptitle" class="t" style="left:48.6px;top:125.01px;font-size:20px;color:#f16022;font-weight:400;letter-spacing:0.488px;">Upload Item(s)</div>
<div id="drop1" class="t" style="left:74px;top:183.01px;font-size:20px;color:#686b6f;font-weight:400;letter-spacing:0.434px;">Drop Media in the box or <span style="color:#f16022">Click</span></div>
<div id="drop2" class="t" style="left:74px;top:210.00px;font-size:20px;color:#f16022;font-weight:400;letter-spacing:0.624px;">here to upload</div>
<div id="comp1" class="t" style="left:397.2px;top:183.01px;font-size:20px;color:#686b6f;font-weight:400;letter-spacing:0.702px;">3 completed out of</div>
<div id="comp2" class="t" style="left:507.9px;top:210.00px;font-size:20px;color:#686b6f;font-weight:400;letter-spacing:0.053px;">3 file(s)</div>
<div id="allsel" class="t" style="left:100.2px;top:260.00px;font-size:20px;color:#686b6f;font-weight:400;letter-spacing:0.293px;">All items selected</div>
<div id="bulk" class="t" style="left:329.9px;top:264.01px;font-size:17.6px;color:#fff;font-weight:400;letter-spacing:0.195px;-webkit-text-stroke:.3px #fff;">Bulk Edit</div>
<div id="remove" class="t" style="left:457.4px;top:264.01px;font-size:17.6px;color:#f16022;font-weight:400;letter-spacing:-0.024px;">Remove all</div>
<div id="hot" class="t" style="left:57.6px;top:731.00px;font-size:20px;color:#686b6f;font-weight:400;letter-spacing:0.268px;">4.68 GB consumed out of 10328.2 GB in Hot Storage</div>
<div id="hotp" class="t" style="left:556.9px;top:758.01px;font-size:20px;color:#686b6f;font-weight:400;letter-spacing:0.000px;">1</div>
<div id="hotq" class="t" style="left:573.1px;top:760.01px;font-size:18.3px;color:#686b6f;font-weight:400;letter-spacing:0.000px;">%</div>
<div id="cool" class="t" style="left:57.6px;top:804.00px;font-size:20px;color:#686b6f;font-weight:400;letter-spacing:0.228px;">0 GB consumed out of 204 GB in Cool Storage</div>
<div id="coolp" class="t" style="left:556.6px;top:831.00px;font-size:20px;color:#686b6f;font-weight:400;letter-spacing:0.000px;">0</div>
<div id="coolq" class="t" style="left:573.1px;top:833.00px;font-size:18.3px;color:#686b6f;font-weight:400;letter-spacing:0.000px;">%</div>
<div id="settitle" class="t" style="left:685px;top:129.01px;font-size:20px;color:#585c64;font-weight:400;letter-spacing:0.606px;-webkit-text-stroke:.55px #585c64;">Settings - Update Bulk Settings</div>
<div id="draft" class="t" style="left:712.6px;top:162.01px;font-size:17.6px;color:#686b6f;font-weight:400;letter-spacing:-0.066px;">Save as Draft</div>
<div id="tab1" class="t" style="left:704.3px;top:224.01px;font-size:17.6px;color:#383b40;font-weight:400;letter-spacing:0.270px;-webkit-text-stroke:.25px #383b40;">Basic Settings</div>
<div id="tab2" class="t" style="left:849.9px;top:224.01px;font-size:17.6px;color:#383b40;font-weight:400;letter-spacing:0.630px;-webkit-text-stroke:.25px #383b40;">Publish</div>
<div id="tab3" class="t" style="left:942px;top:224.01px;font-size:17.6px;color:#383b40;font-weight:400;letter-spacing:0.289px;-webkit-text-stroke:.25px #383b40;">Access and Sharing</div>
<div id="tags" class="t" style="left:712.8px;top:304.01px;font-size:17.6px;color:#4b5057;font-weight:400;letter-spacing:-0.324px;">Tags</div>
<div id="ph" class="t" style="left:730px;top:339.01px;font-size:20px;color:#aaa;font-weight:400;letter-spacing:0.097px;">Please add some tags.</div>
<div id="desc" class="t" style="left:712.8px;top:376.01px;font-size:17.6px;color:#4b5057;font-weight:400;letter-spacing:0.428px;">Description</div>
<div id="pp" class="t" style="left:723.7px;top:624.01px;font-size:16px;color:#626a73;font-weight:400;letter-spacing:0.394px;">p</div>
<div id="close" class="t" style="left:723.4px;top:750.00px;font-size:17.6px;color:#5d6168;font-weight:400;letter-spacing:-0.496px;">Close</div>
<div id="sac" class="t" style="left:823.3px;top:750.00px;font-size:17.6px;color:#fff;font-weight:400;letter-spacing:-0.193px;-webkit-text-stroke:.3px #fff;">Save And Close</div>
<div id="save" class="t" style="left:1006.8px;top:750.00px;font-size:17.6px;color:#fff;font-weight:400;letter-spacing:-1.070px;-webkit-text-stroke:.3px #fff;">Save</div>
</body></html>
